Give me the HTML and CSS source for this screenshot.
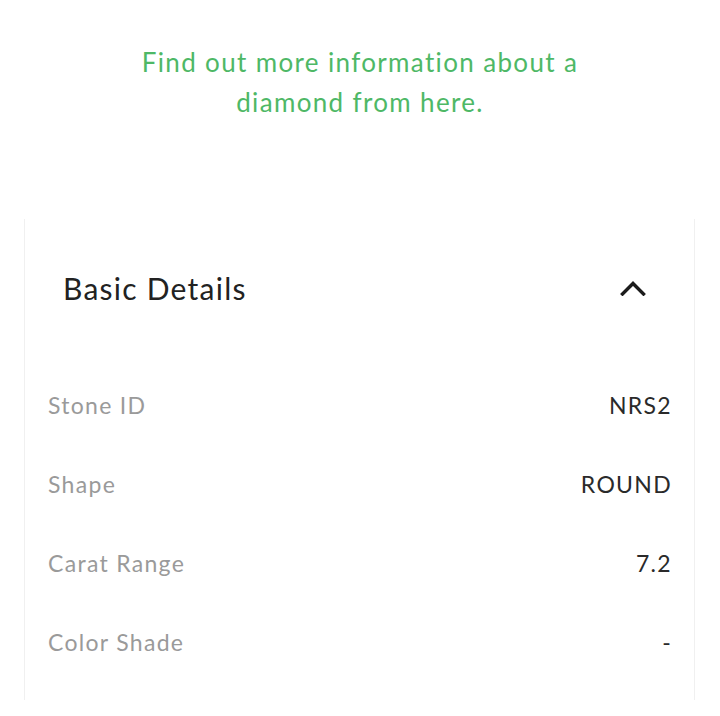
FILE: index.html
```html
<!DOCTYPE html>
<html lang="en">
<head>
<meta charset="utf-8">
<title>Diamond details</title>
<link rel="stylesheet" href="styles.css">
</head>
<body>
<main class="page">
  <p class="intro">Find out more information about a<br>diamond from here.</p>
  <section class="card">
    <header class="card-head">
      <h2 class="card-title">Basic Details</h2>
      <svg class="chevron" width="26" height="16" viewBox="0 0 26 16" aria-hidden="true">
        <path d="M2.5 14 L13 3.5 L23.5 14" fill="none" stroke="#1c1c1c" stroke-width="3.4" stroke-linecap="square"/>
      </svg>
    </header>
    <dl class="details">
      <div class="row"><dt>Stone ID</dt><dd>NRS2</dd></div>
      <div class="row"><dt>Shape</dt><dd>ROUND</dd></div>
      <div class="row"><dt>Carat Range</dt><dd>7.2</dd></div>
      <div class="row"><dt>Color Shade</dt><dd>-</dd></div>
    </dl>
  </section>
</main>
</body>
</html>
```
FILE: styles.css
```css
html, body {
  margin: 0;
  padding: 0;
  background: #ffffff;
}
body {
  font-family: Lato, "Open Sans", "Liberation Sans", sans-serif;
  height: 716px;
  overflow: hidden;
}
.page {
  display: flex;
  flex-direction: column;
}
.intro {
  margin: 0;
  padding-top: 42px;
  text-align: center;
  font-size: 26px;
  line-height: 40px;
  color: #4eb866;
  letter-spacing: 1.35px;
}
.card {
  margin: 97px 25px 0 24px;
  border-left: 1px solid #f0f0f0;
  border-right: 1px solid #f0f0f0;
  height: 481px;
}
.card-head {
  display: flex;
  align-items: center;
  justify-content: space-between;
  padding: 49px 48px 0 38px;
  height: 40px;
}
.card-title {
  margin: 0;
  font-size: 30px;
  font-weight: 400;
  color: #222222;
  letter-spacing: 1.25px;
}
.chevron {
  display: block;
}
.details {
  margin: 80px 0 0;
  padding: 0 22px 0 23px;
}
.row {
  display: flex;
  justify-content: space-between;
  align-items: baseline;
  height: 79px;
  font-size: 23px;
  line-height: 34px;
  letter-spacing: 1.3px;
}
.row dt {
  color: #9a9a9a;
}
.row dd {
  margin: 0;
  color: #2a2a2a;
}
```
